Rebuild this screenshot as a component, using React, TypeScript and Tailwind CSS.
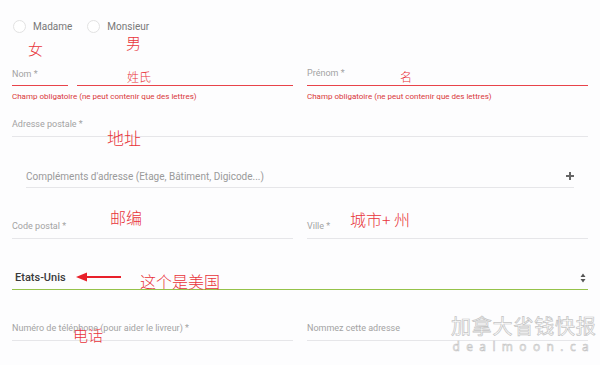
import React from 'react';

const labelCls = "text-[9px] leading-[12px] text-[#a3a3a3]";
const errorCls = "mt-[6px] text-[8px] leading-[10px] text-[#d9373a]";
const noteCls = "absolute text-[#e8343a] font-light leading-none whitespace-nowrap [font-family:'Noto_Sans_CJK_SC',sans-serif]";

const Field = ({ label, className = '' }: { label: string; className?: string }) => (
  <div className={`flex h-[25px] items-end border-b border-[#e6e6e9] pb-[6px] ${className}`}>
    <span className={labelCls}>{label}</span>
  </div>
);

const Radio = ({ label }: { label: string }) => (
  <label className="flex items-center gap-[7px]">
    <span className="h-[13px] w-[13px] rounded-full border border-[#e2e2e2] bg-white" />
    <span className="text-[10px] leading-[12px] text-[#787878]">{label}</span>
  </label>
);

const App = () => {
  return (
    <div className="relative h-[365px] w-[600px] overflow-hidden bg-[#fdfdfe] px-3 [font-family:Roboto,sans-serif]">
      <div className="ml-[1px] flex h-[13px] items-center gap-[15px] pt-0 mt-[20px]">
        <Radio label="Madame" />
        <Radio label="Monsieur" />
      </div>

      <div className="mt-[28px] grid grid-cols-2 gap-[14px]">
        <div>
          <div className="flex h-[25px] flex-col justify-end">
            <span className={`${labelCls} mb-[5px]`}>Nom *</span>
            <div className="flex gap-[9px]">
              <div className="w-[56px] border-b border-[#e8434a]" />
              <div className="flex-1 border-b border-[#e8434a]" />
            </div>
          </div>
          <p className={errorCls}>Champ obligatoire (ne peut contenir que des lettres)</p>
        </div>
        <div>
          <Field label="Prénom *" className="border-[#e8434a]" />
          <p className={errorCls}>Champ obligatoire (ne peut contenir que des lettres)</p>
        </div>
      </div>

      <Field label="Adresse postale *" className="mt-[10px]" />

      <div className="mx-[14px] mt-[26px] flex h-[25px] items-end justify-between border-b border-[#e6e6e9] pb-[4px]">
        <span className="text-[10px] leading-[12px] text-[#9a9a9a]">Compléments d'adresse (Etage, Bâtiment, Digicode...)</span>
        <svg width="10" height="10" viewBox="0 0 10 10" className="mb-[2px] mr-[-1px]">
          <path d="M5 1v8M1 5h8" stroke="#666" strokeWidth="2" />
        </svg>
      </div>

      <div className="mt-[26px] grid grid-cols-2 gap-[14px]">
        <Field label="Code postal *" />
        <Field label="Ville *" />
      </div>

      <div className="mt-[26px] flex h-[25px] items-end justify-between border-b border-[#95c24a] pb-[5px] pl-[3px]">
        <span className="text-[11px] font-medium leading-[13px] text-[#3a3a3a]">Etats-Unis</span>
        <svg width="6" height="10" viewBox="0 0 6 10" className="mb-[1px] mr-[2px]">
          <path d="M3 0.5L5.5 4H0.5z M3 9.5L5.5 6H0.5z" fill="#555" />
        </svg>
      </div>

      <div className="mt-[26px] grid grid-cols-2 gap-[14px]">
        <Field label="Numéro de téléphone (pour aider le livreur) *" />
        <Field label="Nommez cette adresse" />
      </div>

      {/* annotations drawn over the form */}
      <span className={`${noteCls} left-[28px] top-[41px] text-[15px]`}>女</span>
      <span className={`${noteCls} left-[126px] top-[35px] text-[15px]`}>男</span>
      <span className={`${noteCls} left-[127px] top-[71px] text-[12px]`}>姓氏</span>
      <span className={`${noteCls} left-[400px] top-[71px] text-[12px]`}>名</span>
      <span className={`${noteCls} left-[107px] top-[129px] text-[17px]`}>地址</span>
      <span className={`${noteCls} left-[110px] top-[209px] text-[16px]`}>邮编</span>
      <span className={`${noteCls} left-[350px] top-[211px] text-[16px]`}>城市+ 州</span>
      <span className={`${noteCls} left-[140px] top-[273px] text-[16px]`}>这个是美国</span>
      <span className={`${noteCls} left-[73px] top-[327px] text-[15px]`}>电话</span>
      <svg className="absolute left-[76px] top-[272px]" width="46" height="10" viewBox="0 0 46 10">
        <path d="M10 5H45" stroke="#e8202a" strokeWidth="2" />
        <path d="M0 5L11 0.5V9.5z" fill="#e8202a" />
      </svg>

      <div className="absolute left-[451px] top-[315px] flex flex-col items-center">
        <span className="text-[20px] leading-[22px] tracking-[0.8px] text-white [-webkit-text-stroke:0.7px_#c4c4c4] [font-family:'Noto_Sans_CJK_SC',sans-serif]">
          加拿大省钱快报
        </span>
        <span className="mt-[3px] text-[12px] leading-[14px] tracking-[6.4px] text-white [-webkit-text-stroke:0.6px_#c4c4c4] [font-family:'Open_Sans',sans-serif]">
          dealmoon.ca
        </span>
      </div>
    </div>
  );
};

export default App;
